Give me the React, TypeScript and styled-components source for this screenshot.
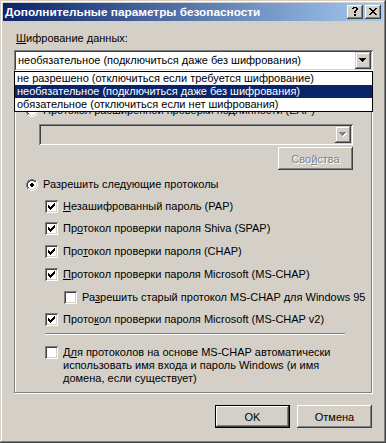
import React from 'react';
import styled, { createGlobalStyle } from 'styled-components';

const FACE = '#D4D0C8';
const SHADOW = '#808080';
const DARK = '#404040';
const HILITE = '#FFFFFF';
const NAVY = '#0A246A';

const Global = createGlobalStyle`
  html, body { margin: 0; padding: 0; background: ${FACE}; }
  body {
    font-family: 'Liberation Sans', Arial, sans-serif;
    font-size: 11px;
    color: #000;
  }
  #root { width: 386px; height: 443px; }
  * { box-sizing: border-box; }
`;

const Window = styled.div`
  width: 386px;
  height: 443px;
  padding: 3px;
  background: ${FACE};
  box-shadow: inset -1px -1px ${DARK}, inset 1px 1px ${FACE}, inset -2px -2px ${SHADOW},
    inset 2px 2px ${HILITE};
  display: flex;
  flex-direction: column;
`;

const TitleBar = styled.div`
  height: 18px;
  display: flex;
  align-items: center;
  padding: 0 2px;
  background: linear-gradient(to right, ${NAVY}, #a6caf0);
`;

const TitleText = styled.div`
  flex: 1;
  color: #fff;
  font-weight: bold;
  font-size: 11.8px;
  line-height: 18px;
  white-space: nowrap;
`;

const CaptionButtons = styled.div`
  display: flex;
  gap: 2px;
`;

const CaptionButton = styled.div`
  width: 16px;
  height: 14px;
  position: relative;
  background: ${FACE};
  box-shadow: inset -1px -1px ${DARK}, inset 1px 1px ${HILITE}, inset -2px -2px ${SHADOW};
  svg { display: block; }
`;

const Client = styled.div`
  flex: 1;
  display: flex;
  flex-direction: column;
  padding: 11px 10px 11px 11px;
`;

const FieldLabel = styled.div`
  line-height: 13px;
  padding-left: 2px;
  white-space: nowrap;
`;

const ComboWrap = styled.div<{ $mt?: number; $ml?: number; $w?: string }>`
  position: relative;
  margin-top: ${(p) => p.$mt ?? 0}px;
  margin-left: ${(p) => p.$ml ?? 0}px;
  width: ${(p) => p.$w ?? 'auto'};
`;

const ComboField = styled.div<{ $disabled?: boolean }>`
  height: 21px;
  display: flex;
  align-items: stretch;
  padding: 2px;
  background: ${(p) => (p.$disabled ? FACE : '#fff')};
  box-shadow: inset 1px 1px ${SHADOW}, inset -1px -1px ${HILITE}, inset 2px 2px ${DARK},
    inset -2px -2px ${FACE};
`;

const ComboText = styled.div`
  flex: 1;
  padding-left: 2px;
  line-height: 17px;
  white-space: nowrap;
  overflow: hidden;
`;

const DropButton = styled.div`
  width: 16px;
  position: relative;
  background: ${FACE};
  box-shadow: inset -1px -1px ${DARK}, inset 1px 1px ${FACE}, inset -2px -2px ${SHADOW},
    inset 2px 2px ${HILITE};
  svg { position: absolute; left: 4px; top: 6px; display: block; }
`;

const DropList = styled.div`
  position: absolute;
  left: 0;
  right: 0;
  top: 100%;
  z-index: 5;
  background: #fff;
  border: 1px solid #000;
`;

const ListItem = styled.div<{ $selected?: boolean }>`
  height: 13px;
  line-height: 13px;
  padding-left: 2px;
  white-space: nowrap;
  background: ${(p) => (p.$selected ? NAVY : '#fff')};
  color: ${(p) => (p.$selected ? '#fff' : '#000')};
`;

const GroupBox = styled.div`
  position: relative;
  margin-top: 20px;
  margin-right: 1px;
  border: 1px solid ${SHADOW};
  box-shadow: 1px 1px 0 ${HILITE}, inset 1px 1px 0 ${HILITE};
  padding: 12px 0 7px 11px;
  display: flex;
  flex-direction: column;
`;

const OptionRow = styled.div<{ $mt?: number; $ml?: number }>`
  display: flex;
  align-items: flex-start;
  margin-top: ${(p) => p.$mt ?? 0}px;
  margin-left: ${(p) => p.$ml ?? 0}px;
  line-height: 13px;
  white-space: nowrap;
`;

const OptionText = styled.span<{ $gap: number; $wrap?: boolean }>`
  padding-left: ${(p) => p.$gap}px;
  white-space: ${(p) => (p.$wrap ? 'normal' : 'nowrap')};
  width: ${(p) => (p.$wrap ? '290px' : 'auto')};
`;

const RadioBox = styled.span`
  width: 12px;
  height: 12px;
  flex: none;
  margin-top: 1px;
  svg { display: block; }
`;

const CheckBoxFrame = styled.span`
  width: 13px;
  height: 13px;
  flex: none;
  background: #fff;
  box-shadow: inset 1px 1px ${SHADOW}, inset -1px -1px ${HILITE}, inset 2px 2px ${DARK},
    inset -2px -2px ${FACE};
  svg { display: block; }
`;

const ButtonRow = styled.div<{ $mt?: number; $gap?: number; $w?: number; $mr?: number }>`
  display: flex;
  justify-content: flex-end;
  gap: ${(p) => p.$gap ?? 7}px;
  margin-top: ${(p) => p.$mt ?? 0}px;
  margin-right: ${(p) => p.$mr ?? 0}px;
  width: ${(p) => (p.$w ? `${p.$w}px` : 'auto')};
`;

const PushButton = styled.button<{ $default?: boolean }>`
  width: 75px;
  height: 23px;
  border: none;
  padding: 0;
  margin: 0;
  font: inherit;
  color: #000;
  background: ${FACE};
  box-shadow: ${(p) =>
    p.$default
      ? `inset 0 0 0 1px #000, inset -2px -2px ${DARK}, inset 2px 2px ${HILITE}, inset -3px -3px ${SHADOW}`
      : `inset -1px -1px ${DARK}, inset 1px 1px ${HILITE}, inset -2px -2px ${SHADOW}`};
  &:disabled {
    color: ${SHADOW};
    text-shadow: 1px 1px 0 ${HILITE};
  }
`;

const Separator = styled.div`
  width: 300px;
  height: 2px;
  margin: 7px 0 0 19px;
  border-top: 1px solid ${SHADOW};
  border-bottom: 1px solid ${HILITE};
`;

type Px = [number, number, number?, number?];

const Pixels: React.FC<{ pts: Px[]; fill: string }> = ({ pts, fill }) => (
  <>
    {pts.map(([x, y, w = 1, h = 1], i) => (
      <rect key={i} x={x} y={y} width={w} height={h} fill={fill} />
    ))}
  </>
);

const Radio: React.FC<{ checked?: boolean }> = ({ checked }) => (
  <RadioBox>
    <svg width="12" height="12" viewBox="0 0 12 12" shapeRendering="crispEdges">
      <Pixels fill="#fff" pts={[[4, 2, 4], [3, 3, 6], [2, 4, 8, 4], [3, 8, 6], [4, 9, 4]]} />
      <Pixels fill={SHADOW} pts={[[4, 0, 4], [2, 1, 2], [8, 1, 2], [1, 2, 1, 2], [0, 4, 1, 4], [1, 8, 1, 2]]} />
      <Pixels fill={HILITE} pts={[[10, 2, 1, 2], [11, 4, 1, 4], [10, 8, 1, 2], [2, 10, 2], [8, 10, 2], [4, 11, 4]]} />
      <Pixels fill={DARK} pts={[[4, 1, 4], [2, 2, 2], [8, 2, 2], [2, 3], [1, 4, 1, 4], [2, 8]]} />
      <Pixels fill={FACE} pts={[[9, 3], [10, 4, 1, 4], [9, 8], [2, 9, 2], [8, 9, 2], [4, 10, 4]]} />
      {checked && <Pixels fill="#000" pts={[[5, 4, 2], [4, 5, 4, 2], [5, 7, 2]]} />}
    </svg>
  </RadioBox>
);

const CheckBox: React.FC<{ checked?: boolean }> = ({ checked }) => (
  <CheckBoxFrame>
    {checked && (
      <svg width="13" height="13" viewBox="0 0 13 13" shapeRendering="crispEdges">
        <Pixels
          fill="#000"
          pts={[[3, 5, 1, 3], [4, 6, 1, 3], [5, 7, 1, 3], [6, 6, 1, 3], [7, 5, 1, 3], [8, 4, 1, 3], [9, 3, 1, 3]]}
        />
      </svg>
    )}
  </CheckBoxFrame>
);

const Arrow: React.FC<{ disabled?: boolean }> = ({ disabled }) => (
  <svg width="8" height="5" viewBox="0 0 8 5" shapeRendering="crispEdges">
    {disabled && <Pixels fill={HILITE} pts={[[1, 1, 7], [2, 2, 5], [3, 3, 3], [4, 4, 1]]} />}
    <Pixels fill={disabled ? SHADOW : '#000'} pts={[[0, 0, 7], [1, 1, 5], [2, 2, 3], [3, 3, 1]]} />
  </svg>
);

const Combo: React.FC<{ text?: string; disabled?: boolean }> = ({ text, disabled }) => (
  <ComboField $disabled={disabled}>
    <ComboText>{text}</ComboText>
    <DropButton>
      <Arrow disabled={disabled} />
    </DropButton>
  </ComboField>
);

const HelpGlyph = () => (
  <svg width="16" height="14" viewBox="0 0 16 14" shapeRendering="crispEdges">
    <Pixels
      fill="#000"
      pts={[[6, 2, 4], [5, 3, 2], [9, 3, 2], [9, 4, 2], [8, 5, 2], [7, 6, 2], [7, 7, 2], [7, 9, 2, 2]]}
    />
  </svg>
);

const CloseGlyph = () => (
  <svg width="16" height="14" viewBox="0 0 16 14" shapeRendering="crispEdges">
    <Pixels
      fill="#000"
      pts={[
        [4, 3, 2], [10, 3, 2],
        [5, 4, 2], [9, 4, 2],
        [6, 5, 4],
        [7, 6, 2],
        [6, 7, 4],
        [5, 8, 2], [9, 8, 2],
        [4, 9, 2], [10, 9, 2],
      ]}
    />
  </svg>
);

export default function App() {
  return (
    <>
      <Global />
      <Window>
        <TitleBar>
          <TitleText>Дополнительные параметры безопасности</TitleText>
          <CaptionButtons>
            <CaptionButton>
              <HelpGlyph />
            </CaptionButton>
            <CaptionButton>
              <CloseGlyph />
            </CaptionButton>
          </CaptionButtons>
        </TitleBar>
        <Client>
          <FieldLabel>
            <u>Ш</u>ифрование данных:
          </FieldLabel>
          <ComboWrap $mt={5}>
            <Combo text="необязательное (подключиться даже без шифрования)" />
            <DropList>
              <ListItem>не разрешено (отключиться если требуется шифрование)</ListItem>
              <ListItem $selected>необязательное (подключиться даже без шифрования)</ListItem>
              <ListItem>обязательное (отключиться если нет шифрования)</ListItem>
            </DropList>
          </ComboWrap>
          <GroupBox>
            <OptionRow>
              <Radio />
              <OptionText $gap={5}>Протокол расширенной проверки подлинности (EAP)</OptionText>
            </OptionRow>
            <ComboWrap $mt={7} $ml={13} $w="314px">
              <Combo disabled />
            </ComboWrap>
            <ButtonRow $mt={2} $w={327}>
              <PushButton disabled>
                Сво<u>й</u>ства
              </PushButton>
            </ButtonRow>
            <OptionRow $mt={8}>
              <Radio checked />
              <OptionText $gap={5}>Разрешить следующие протоколы</OptionText>
            </OptionRow>
            <OptionRow $mt={9} $ml={19}>
              <CheckBox checked />
              <OptionText $gap={5}>
                <u>Н</u>езашифрованный пароль (PAP)
              </OptionText>
            </OptionRow>
            <OptionRow $mt={9} $ml={19}>
              <CheckBox checked />
              <OptionText $gap={5}>
                Пр<u>о</u>токол проверки пароля Shiva (SPAP)
              </OptionText>
            </OptionRow>
            <OptionRow $mt={10} $ml={19}>
              <CheckBox checked />
              <OptionText $gap={5}>
                Про<u>т</u>окол проверки пароля (CHAP)
              </OptionText>
            </OptionRow>
            <OptionRow $mt={10} $ml={19}>
              <CheckBox checked />
              <OptionText $gap={5}>
                <u>П</u>ротокол проверки пароля Microsoft (MS-CHAP)
              </OptionText>
            </OptionRow>
            <OptionRow $mt={10} $ml={38}>
              <CheckBox />
              <OptionText $gap={5}>
                Ра<u>з</u>решить старый протокол MS-CHAP для Windows 95
              </OptionText>
            </OptionRow>
            <OptionRow $mt={9} $ml={19}>
              <CheckBox checked />
              <OptionText $gap={5}>
                Прото<u>к</u>ол проверки пароля Microsoft (MS-CHAP v2)
              </OptionText>
            </OptionRow>
            <Separator />
            <OptionRow $mt={11} $ml={19}>
              <CheckBox />
              <OptionText $gap={5} $wrap>
                Д<u>л</u>я протоколов на основе MS-CHAP автоматически использовать имя входа и
                пароль Windows (и имя домена, если существует)
              </OptionText>
            </OptionRow>
          </GroupBox>
          <ButtonRow $mt={12} $gap={7} $mr={1}>
            <PushButton $default>OK</PushButton>
            <PushButton>Отмена</PushButton>
          </ButtonRow>
        </Client>
      </Window>
    </>
  );
}
